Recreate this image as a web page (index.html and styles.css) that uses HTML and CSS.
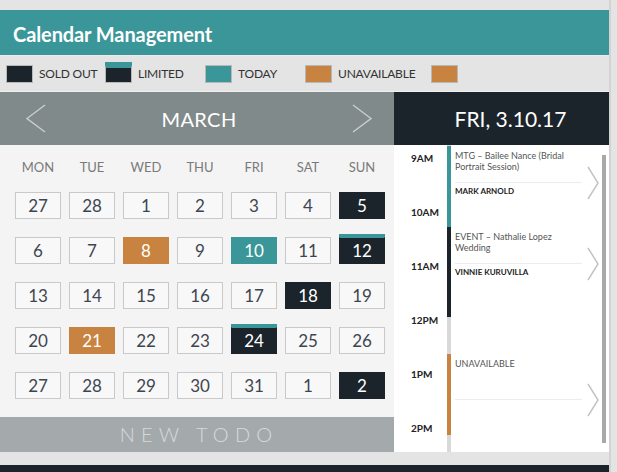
FILE: index.html
```html
<!DOCTYPE html>
<html>
<head>
<meta charset="utf-8">
<link rel="stylesheet" href="styles.css">
</head>
<body>
<div class="app">
  <div class="header">Calendar Management</div>
  <div class="legend">
    <div class="legend-item"><span class="swatch sold"></span><span class="legend-label">SOLD OUT</span></div>
    <div class="legend-item"><span class="swatch limited"></span><span class="legend-label">LIMITED</span></div>
    <div class="legend-item"><span class="swatch today"></span><span class="legend-label">TODAY</span></div>
    <div class="legend-item wide"><span class="swatch unavail"></span><span class="legend-label">UNAVAILABLE</span></div>
    <div class="legend-item"><span class="swatch unavail"></span></div>
  </div>
  <div class="main">
    <div class="calendar">
      <div class="month-bar">
        <svg class="chev" width="20" height="30" viewBox="0 0 20 30"><polyline points="19,1 1,14.5 19,28" fill="none" stroke="#c9cfcf" stroke-width="1.4"/></svg>
        <span class="month">MARCH</span>
        <svg class="chev" width="20" height="30" viewBox="0 0 20 30"><polyline points="1,1 19,14.5 1,28" fill="none" stroke="#c9cfcf" stroke-width="1.4"/></svg>
      </div>
      <div class="cal-body">
        <div class="grid names">
          <span>MON</span><span>TUE</span><span>WED</span><span>THU</span><span>FRI</span><span>SAT</span><span>SUN</span>
        </div>
        <div class="grid days">
          <span class="cell">27</span><span class="cell">28</span><span class="cell">1</span><span class="cell">2</span><span class="cell">3</span><span class="cell">4</span><span class="cell sold">5</span>
          <span class="cell">6</span><span class="cell">7</span><span class="cell unavail">8</span><span class="cell">9</span><span class="cell today">10</span><span class="cell">11</span><span class="cell sold limited">12</span>
          <span class="cell">13</span><span class="cell">14</span><span class="cell">15</span><span class="cell">16</span><span class="cell">17</span><span class="cell sold">18</span><span class="cell">19</span>
          <span class="cell">20</span><span class="cell unavail">21</span><span class="cell">22</span><span class="cell">23</span><span class="cell sold limited">24</span><span class="cell">25</span><span class="cell">26</span>
          <span class="cell">27</span><span class="cell">28</span><span class="cell">29</span><span class="cell">30</span><span class="cell">31</span><span class="cell">1</span><span class="cell sold">2</span>
        </div>
      </div>
      <div class="new-todo">NEW TODO</div>
    </div>
    <div class="day">
      <div class="day-header">FRI, 3.10.17</div>
      <div class="day-body">
        <div class="times">
          <div class="slot">9AM</div>
          <div class="slot">10AM</div>
          <div class="slot">11AM</div>
          <div class="slot">12PM</div>
          <div class="slot">1PM</div>
          <div class="slot">2PM</div>
        </div>
        <div class="events">
          <div class="event ev-teal">
            <div class="event-title">MTG – Bailee Nance (Bridal Portrait Session)</div>
            <div class="divider-row"><span class="divider"></span><svg class="ev-chev" width="12" height="34" viewBox="0 0 12 34"><polyline points="1,1 11,17 1,33" fill="none" stroke="#c4c4c4" stroke-width="1.5"/></svg></div>
            <div class="event-name">MARK ARNOLD</div>
          </div>
          <div class="event ev-dark">
            <div class="event-title">EVENT – Nathalie Lopez Wedding</div>
            <div class="divider-row"><span class="divider"></span><svg class="ev-chev" width="12" height="34" viewBox="0 0 12 34"><polyline points="1,1 11,17 1,33" fill="none" stroke="#c4c4c4" stroke-width="1.5"/></svg></div>
            <div class="event-name">VINNIE KURUVILLA</div>
          </div>
          <div class="event-gap"></div>
          <div class="event ev-orange">
            <div class="event-title tall">UNAVAILABLE</div>
            <div class="divider-row"><span class="divider"></span><svg class="ev-chev" width="12" height="34" viewBox="0 0 12 34"><polyline points="1,1 11,17 1,33" fill="none" stroke="#c4c4c4" stroke-width="1.5"/></svg></div>
          </div>
        </div>
        <div class="scroll"><div class="thumb"></div></div>
      </div>
    </div>
  </div>
  <div class="gap"></div>
  <div class="footer"></div>
</div>
</body>
</html>
```

FILE: styles.css
```css
* { box-sizing: border-box; }
html, body { margin: 0; padding: 0; }
body {
  background: #e4e4e4;
  font-family: Lato, "Liberation Sans", sans-serif;
  height: 472px;
  overflow: hidden;
}
.app {
  width: 611px;
  padding-top: 10px;
  border-right: 2px solid #d3d3d3;
  background: #e4e4e4;
}
.header {
  height: 46px;
  background: #3a9698;
  border-bottom: 1px solid #ebebeb;
  color: #fff;
  font-size: 20px;
  font-weight: 700;
  line-height: 48px;
  padding-left: 13px;
  letter-spacing: -0.1px;
}
.legend {
  height: 36px;
  display: flex;
  align-items: center;
  padding-left: 6px;
  border-bottom: 1px solid #f0f0f0;
}
.legend-item {
  width: 100px;
  display: flex;
  align-items: center;
}
.legend-item:first-child { width: 99px; }
.legend-item.wide { width: 126px; }
.swatch {
  width: 27px;
  height: 18px;
  border: 1px solid #b8b8b8;
  display: inline-block;
}
.swatch.sold { background: #1c242b; }
.swatch.limited {
  background: #1c242b;
  border-top: 3px solid #3a9698;
  box-shadow: 0 -3px 0 #3a9698;
}
.swatch.today { background: #3a9698; }
.swatch.unavail { background: #c7833f; }
.legend-label {
  margin-left: 6px;
  font-size: 12px;
  color: #333;
  letter-spacing: -0.2px;
}
.main {
  display: flex;
  height: 360px;
  overflow: hidden;
}
.calendar { width: 394px; display: flex; flex-direction: column; }
.month-bar {
  height: 53px;
  flex: none;
  background: #808a8b;
  display: flex;
  align-items: center;
  justify-content: space-between;
  padding: 0 22px 0 26px;
}
.month {
  color: #fff;
  font-size: 20px;
  letter-spacing: 0.4px;
}
.cal-body {
  flex: 1;
  background: #f4f4f4;
  padding: 14px 0 0 15px;
}
.grid {
  display: grid;
  grid-template-columns: repeat(7, 46px);
  column-gap: 8px;
}
.names {
  font-size: 13px;
  line-height: 16px;
  color: #7a7a7a;
  text-align: center;
  margin-bottom: 17px;
}
.days { row-gap: 18px; }
.cell {
  height: 27px;
  border: 1px solid #c9c9c9;
  background: #f8f8f8;
  color: #3d4650;
  font-size: 17px;
  line-height: 25px;
  text-align: center;
}
.cell.sold { background: #1c242b; border-color: #1c242b; color: #fff; }
.cell.today { background: #3a9698; border-color: #3a9698; color: #fff; }
.cell.unavail { background: #c7833f; border-color: #c7833f; color: #fff; }
.cell.limited { border-top-color: #3a9698; box-shadow: 0 -3px 0 #3a9698; }
.new-todo {
  height: 35px;
  flex: none;
  background: #a4aaab;
  color: #d6dada;
  font-size: 20px;
  font-weight: 300;
  line-height: 35px;
  letter-spacing: 6.2px;
  text-align: center;
  padding-left: 4px;
}
.day { width: 215px; display: flex; flex-direction: column; }
.day-header {
  height: 53px;
  flex: none;
  background: #1c242b;
  color: #fff;
  font-size: 21px;
  line-height: 53px;
  text-align: center;
  padding-left: 18px;
}
.day-body {
  flex: 1;
  min-height: 0;
  overflow: hidden;
  background: #fff;
  display: flex;
}
.times {
  width: 53px;
  padding-top: 6px;
}
.slot {
  height: 54px;
  padding-left: 17px;
  font-size: 10px;
  font-weight: 700;
  line-height: 14px;
  color: #222;
}
.events {
  width: 154px;
  border-left: 4px solid #d9d9d9;
  padding-top: 1px;
}
.event {
  margin-left: -4px;
  border-left: 4px solid #3a9698;
  padding: 5px 0 0 4px;
}
.ev-teal { height: 81px; }
.ev-dark { height: 90px; border-left-color: #1c242b; }
.ev-orange { height: 81px; border-left-color: #c7833f; }
.event-gap { height: 37px; }
.event-title {
  height: 31px;
  font-size: 9px;
  line-height: 10.5px;
  color: #555;
  padding-right: 20px;
}
.event-title.tall { height: 40px; }
.divider-row {
  display: flex;
  align-items: center;
  height: 1px;
}
.divider {
  flex: 1;
  height: 1px;
  background: #ececec;
}
.ev-chev {
  margin: -17px 2px -17px 5px;
  flex: none;
}
.event-name {
  margin-top: 3px;
  font-size: 8px;
  font-weight: 700;
  line-height: 10px;
  color: #222;
}
.scroll { width: 8px; padding: 10px 0 0 1px; }
.thumb { width: 4px; height: 288px; background: #a8a8a8; }
.gap { height: 13px; }
.footer { height: 20px; background: #1c242b; }
```
